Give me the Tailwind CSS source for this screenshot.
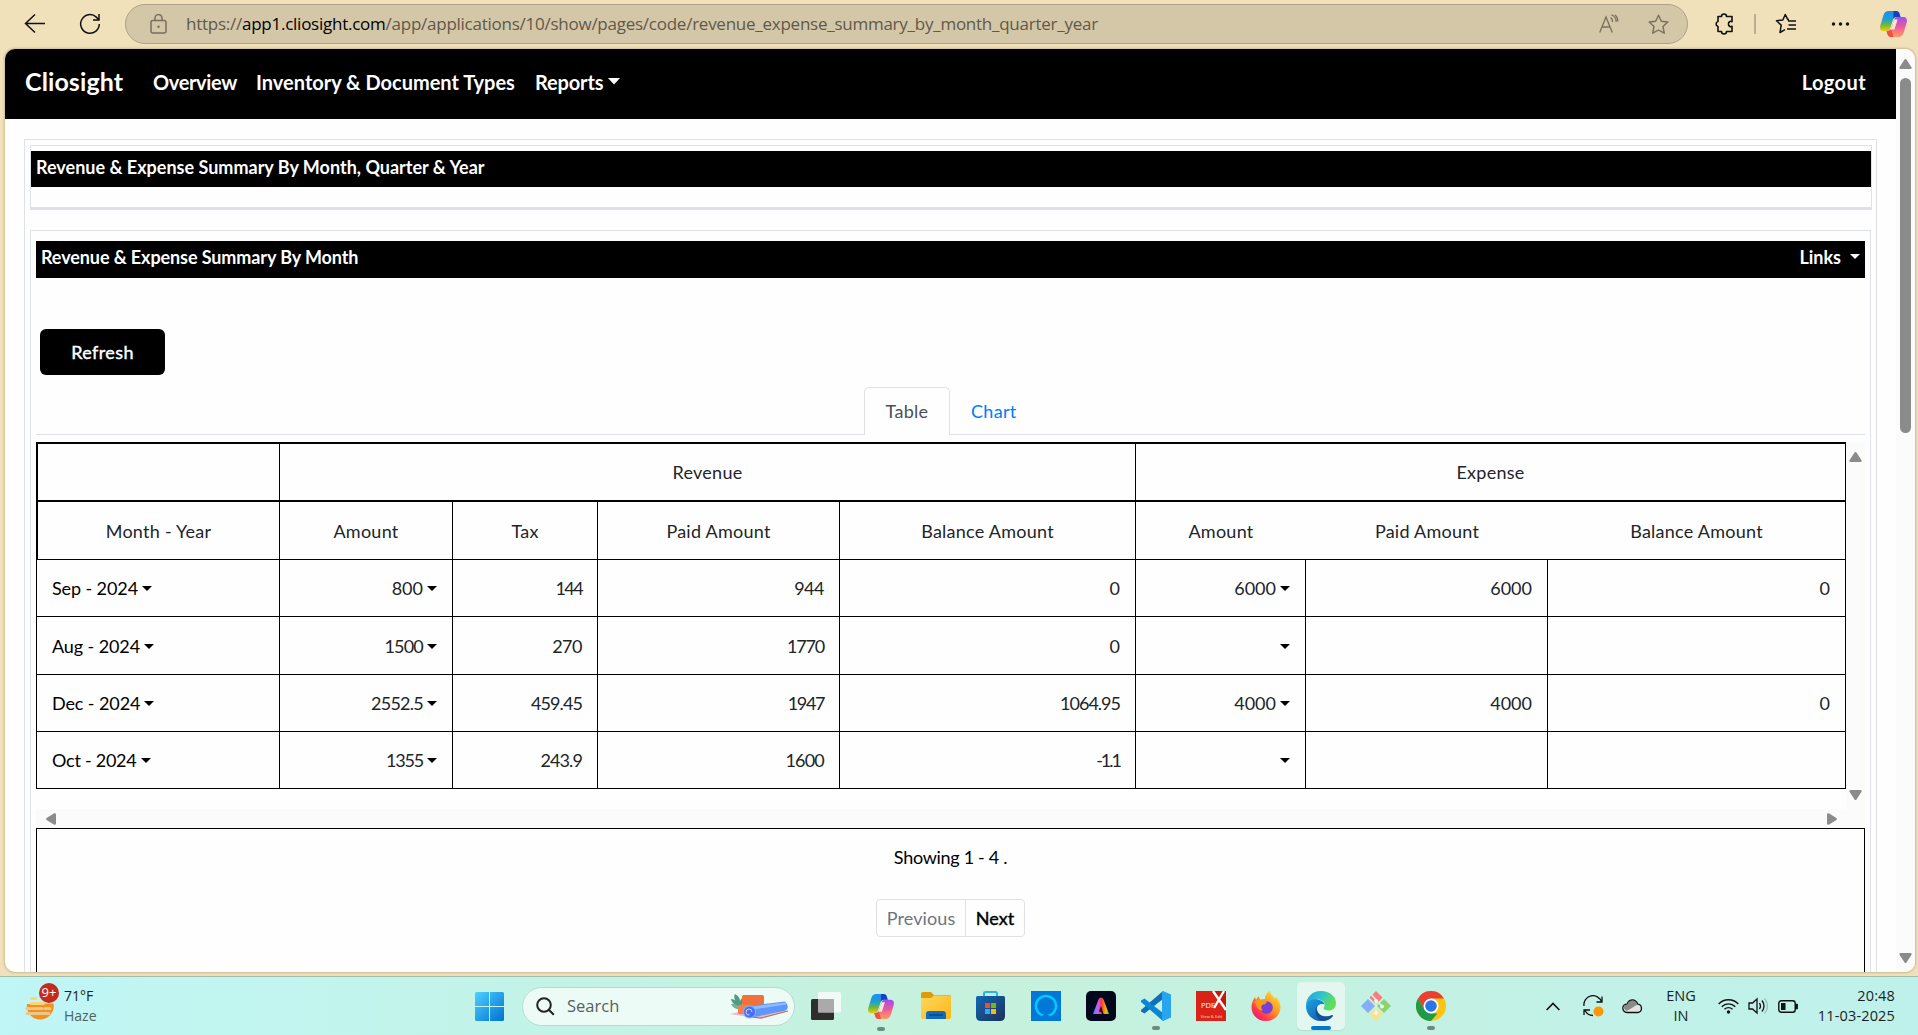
<!DOCTYPE html>
<html lang="en">
<head>
<meta charset="utf-8">
<title>Cliosight</title>
<script src="https://cdn.jsdelivr.net/npm/@tailwindcss/browser@4"></script>
</head>
<body class="relative w-[1918px] h-[1035px] overflow-hidden flex flex-col bg-[#f0e1bb] font-['Open_Sans',sans-serif] text-[#212529]">

<!-- Shared gradients and symbols -->
<svg class="absolute w-0 h-0">
  <defs>
    <linearGradient id="cpA" x1="0" y1="0" x2="0" y2="1"><stop offset="0" stop-color="#1f8ff0"/><stop offset=".4" stop-color="#1aa0d8"/><stop offset=".7" stop-color="#6fb83c"/><stop offset="1" stop-color="#f4c80c"/></linearGradient>
    <linearGradient id="cpB" x1="0" y1="0" x2="0" y2="1"><stop offset="0" stop-color="#a04df0"/><stop offset=".5" stop-color="#ee5a9a"/><stop offset="1" stop-color="#ffa05c"/></linearGradient>
    <linearGradient id="winG" gradientUnits="userSpaceOnUse" x1="0" y1="0" x2="29" y2="29"><stop offset="0" stop-color="#4fd0ff"/><stop offset="1" stop-color="#0071d3"/></linearGradient>
    <linearGradient id="foldG" x1="0" y1="0" x2="1" y2="1"><stop offset="0" stop-color="#ffd860"/><stop offset="1" stop-color="#fbb615"/></linearGradient>
    <linearGradient id="storeG" x1="0" y1="0" x2="1" y2="1"><stop offset="0" stop-color="#1268b8"/><stop offset="1" stop-color="#1d3158"/></linearGradient>
    <linearGradient id="adG" x1="0" y1="0" x2="1" y2="0"><stop offset="0" stop-color="#3f8cff"/><stop offset=".3" stop-color="#c45cff"/><stop offset=".55" stop-color="#ff3b30"/><stop offset=".8" stop-color="#ffb400"/><stop offset="1" stop-color="#38d060"/></linearGradient>
    <linearGradient id="ffG" x1="1" y1="0" x2="0.1" y2="1"><stop offset="0" stop-color="#fff04a"/><stop offset=".45" stop-color="#ff9a20"/><stop offset=".75" stop-color="#ff3b50"/><stop offset="1" stop-color="#e0107c"/></linearGradient>
    <linearGradient id="edA" x1="0" y1="0" x2="1" y2=".4"><stop offset="0" stop-color="#1f9fe0"/><stop offset=".5" stop-color="#2fc3d0"/><stop offset="1" stop-color="#62e055"/></linearGradient>
    <linearGradient id="edB" x1="0" y1="0" x2="1" y2="1"><stop offset="0" stop-color="#1da0e6"/><stop offset="1" stop-color="#0f4f9c"/></linearGradient>
    <symbol id="copilot" viewBox="0 0 28 26">
      <path d="M9 0h7.500c2 0 3 1 3.600 3l.9 3h-4c-2 0-3 1-3.600 3l-2.600 8c-.6 2-1.600 3-3.800 3H4C1 20 0 17.500 .8 14.500L4 4C5 1.200 6.500 0 9 0z" fill="url(#cpA)"/>
      <path d="M14 0h2.500c2 0 3 1 3.600 3l.9 3h-4c-1.500 0-2.600.6-3.200 2z" fill="#1740c0"/>
      <path d="M19 26h-7.500c-2 0-3-1-3.600-3L7 20c3 0 4.200-1 4.800-3l2.600-8c.6-2 1.600-3 3.600-3h6c3 0 4 2.500 3.200 5.500L24 22c-1 2.800-2.500 4-5 4z" fill="url(#cpB)"/>
      <path d="M14 26h-2.500c-2 0-3-1-3.600-3L7 20c2.500 0 4-.6 4.600-2z" fill="#f0503c"/>
      <path d="M14.500 8.500h3.600l-3.200 10h-3.600z" fill="#f3ead0"/>
    </symbol>
  </defs>
</svg>

<!-- Browser toolbar -->
<header class="h-[49px] shrink-0 flex items-start">
  <svg class="ml-[24px] mt-[13px] size-[22px]" viewBox="0 0 22 22" fill="none" stroke="#111" stroke-width="1.500"><path d="M21 10.500H1.500M11 1.500l-9.500 9 9.500 9"/></svg>
  <svg class="ml-[33px] mt-[13px] size-[22px]" viewBox="0 0 22 22" fill="none" stroke="#111" stroke-width="1.500"><path d="M20.300 11a9.300 9.300 0 1 1-3-6.900l2.400 2.400M20 1v6h-6"/></svg>
  <div class="ml-[24px] mt-[4px] w-[1563px] h-[40px] rounded-full border border-[#aea288] bg-[#d4c7a7] flex items-center">
    <svg class="ml-[24px] w-[17px] h-[20px] -mt-[1px]" viewBox="0 0 17 20" fill="none" stroke="#77705f" stroke-width="1.500"><rect x="1" y="6.500" width="15" height="12.500" rx="2"/><path d="M5 6.500V4a3.500 3.500 0 0 1 7 0v2.500"/><circle cx="8.500" cy="12.700" r="1.200" fill="#77705f" stroke="none"/></svg>
    <div class="ml-[19px] w-[1400px] whitespace-nowrap text-[17px] leading-[24px] -mt-[1px] text-[#5f594c] tracking-[-0.25px]">https://<span class="text-black">app1.cliosight.com</span>/app/applications/10/show/pages/code/revenue_expense_summary_by_month_quarter_year</div>
    <svg class="ml-[13px] w-[20px] h-[20px] shrink-0" viewBox="0 0 20 20" fill="none" stroke="#77705f" stroke-width="1.300"><path d="M.7 18.500L7 3l6.300 15.500M3 13h8M11.500 3.500c1.300.8 2.200 2.700 2 4.500M12.500 .8c3 1 5 4 4.500 7M16 1c1.800 1.500 3 4 2.700 6.500" /></svg>
    <svg class="ml-[29px] w-[21px] h-[21px] shrink-0" viewBox="0 0 21 21" fill="none" stroke="#77705f" stroke-width="1.400" stroke-linejoin="round"><path d="M10.500 1.200l2.800 6 6.500.8-4.800 4.500 1.300 6.700-5.800-3.200-5.800 3.200L6 12.500 1.200 8l6.500-.8z"/></svg>
  </div>
  <svg class="ml-[26px] mt-[13px] w-[20px] h-[22px]" viewBox="0 0 20 22" fill="none" stroke="#111" stroke-width="1.600" stroke-linejoin="round"><path d="M4 3.500h3.500a2.500 2.500 0 0 1 5 0H18v5.200a2.300 2.300 0 0 0-3.500 2.300A2.300 2.300 0 0 0 18 13.300v5.200h-5.500a2.500 2.500 0 0 1-5 0H4v-5a2.600 2.600 0 0 1 0-5z"/></svg>
  <div class="ml-[20px] mt-[14px] w-[2px] h-[20px] bg-[#b9ad90]"></div>
  <svg class="ml-[19px] mt-[13px] w-[22px] h-[22px]" viewBox="0 0 22 22" fill="none" stroke="#111" stroke-width="1.500" stroke-linejoin="round"><path d="M14 6.500l-1.300-.1L10.300 1.500 7.800 7 1.500 7.800l4.700 4.300L5 19.500l5-2.800M13 8h8M13.500 12H21M12 16h9"/></svg>
  <svg class="ml-[34px] mt-[22px] w-[20px] h-[5px]" viewBox="0 0 20 5" fill="#111"><circle cx="2.500" cy="2" r="1.700"/><circle cx="9.500" cy="2" r="1.700"/><circle cx="16.500" cy="2" r="1.700"/></svg>
  <svg class="ml-[28px] mt-[11px] w-[29px] h-[26px]"><use href="#copilot"/></svg>
</header>

<!-- Page viewport -->
<div class="ml-[5px] w-[1910px] h-[923px] shrink-0 rounded-[10px] overflow-hidden bg-[#fefefe] flex shadow-[0_0_2px_1px_rgba(160,140,90,0.45)]">
  <div class="w-[1891px] flex flex-col">
    <nav class="h-[70px] shrink-0 bg-black text-white font-['Lato',sans-serif] font-bold text-[20px] leading-[30px] flex pt-[18px] whitespace-nowrap">
      <span class="ml-[20px] w-[128px] text-[25px] leading-[29px] tracking-[0.1px]">Cliosight</span>
      <span class="w-[103px] tracking-[-0.35px]">Overview</span>
      <span class="w-[279px]">Inventory &amp; Document Types</span>
      <span class="flex tracking-[-0.15px]">Reports<svg class="ml-[5px] mt-[11px] w-[12px] h-[7px]" viewBox="0 0 12 7" fill="#fff"><path d="M0 0h12L6 6.500z"/></svg></span>
      <span class="ml-auto mr-[30px] tracking-[0.4px]">Logout</span>
    </nav>

    <main class="ml-[19px] mt-[20px] w-[1853px] h-[900px] border border-[#dee2e6] pt-[5px] pl-[5px]">
      <section class="w-[1842px] h-[65px] border border-b-[3px] border-[#dee2e6] pt-[5px]">
        <h1 class="h-[36px] bg-black text-white font-['Lato',sans-serif] font-bold text-[18px] leading-[33px] pl-[5px]">Revenue &amp; Expense Summary By Month, Quarter &amp; Year</h1>
      </section>

      <section class="mt-[20px] w-[1841px] h-[790px] border border-[#dee2e6] px-[5px] pt-[10px] font-['Lato',sans-serif] text-[18px] leading-[28px]">
        <div class="h-[37px] bg-black text-white font-bold text-[18px] leading-[33px] pl-[5px] pr-[5px] flex justify-between">
          <h2 class="tracking-[-0.1px]">Revenue &amp; Expense Summary By Month</h2>
          <span class="flex">Links<svg class="ml-[9px] mt-[13px] w-[10px] h-[6px]" viewBox="0 0 10 6" fill="#fff"><path d="M0 0h10L5 5z"/></svg></span>
        </div>
        <button class="block ml-[4px] mt-[51px] w-[125px] h-[46px] rounded-[6px] bg-black text-white text-center tracking-[0.4px] [-webkit-text-stroke:0.4px_white]">Refresh</button>

        <div class="mt-[12px] h-[48px] border-b border-[#dee2e6] flex pl-[828px]">
          <div class="w-[86px] h-[48px] border border-b-0 border-[#dee2e6] rounded-t-[5px] bg-[#fefefe] text-center leading-[47px] text-[#495057] tracking-[0.3px]">Table</div>
          <div class="ml-[21px] leading-[49px] text-[#007bff] tracking-[0.3px]">Chart</div>
        </div>

        <div class="mt-[7px] h-[386px] grid grid-cols-[1810px_19px] grid-rows-[367px_19px]">
          <div>
            <table class="table-fixed w-[1810px] border-separate border-spacing-0 text-right [&_td]:border-r [&_td]:border-b [&_td]:border-black [&_td]:pr-[15px] [&_th]:font-normal [&_th]:text-center [&_th]:tracking-[0.25px] [&_th]:border-black [&_th]:border-r [&_svg]:inline-block [&_svg]:w-[10px] [&_svg]:h-[5px] [&_svg]:ml-[4px] [&_svg]:-mt-[3px]">
              <colgroup><col class="w-[244px]"><col class="w-[173px]"><col class="w-[145px]"><col class="w-[242px]"><col class="w-[296px]"><col class="w-[170px]"><col class="w-[242px]"><col class="w-[298px]"></colgroup>
              <tr class="h-[60px] [&_th]:border-y-2"><th class="border-l-2"></th><th colspan="4">Revenue</th><th colspan="3">Expense</th></tr>
              <tr class="h-[58px] [&_th]:border-b"><th class="border-l-2">Month - Year</th><th>Amount</th><th>Tax</th><th>Paid Amount</th><th>Balance Amount</th><th class="border-r-0!">Amount</th><th class="border-r-0!">Paid Amount</th><th>Balance Amount</th></tr>
              <tr class="h-[57px]"><td class="border-l text-left pl-[15px] text-black tracking-[-0.1px]">Sep - 2024<svg viewBox="0 0 10 5"><path d="M0 0h10L5 5z"/></svg></td><td>800<svg viewBox="0 0 10 5"><path d="M0 0h10L5 5z"/></svg></td><td class="tracking-[-1.600px]">144</td><td class="tracking-[-0.5px]">944</td><td>0</td><td>6000<svg viewBox="0 0 10 5"><path d="M0 0h10L5 5z"/></svg></td><td>6000</td><td>0</td></tr>
              <tr class="h-[58px]"><td class="border-l text-left pl-[15px] text-black tracking-[-0.1px]">Aug - 2024<svg viewBox="0 0 10 5"><path d="M0 0h10L5 5z"/></svg></td><td><span class="tracking-[-0.8px]">1500</span><svg viewBox="0 0 10 5"><path d="M0 0h10L5 5z"/></svg></td><td class="tracking-[-0.5px]">270</td><td class="tracking-[-1.200px]">1770</td><td>0</td><td><svg viewBox="0 0 10 5"><path d="M0 0h10L5 5z"/></svg></td><td></td><td></td></tr>
              <tr class="h-[57px]"><td class="border-l text-left pl-[15px] text-black tracking-[-0.1px]">Dec - 2024<svg viewBox="0 0 10 5"><path d="M0 0h10L5 5z"/></svg></td><td><span class="tracking-[-0.75px]">2552.5</span><svg viewBox="0 0 10 5"><path d="M0 0h10L5 5z"/></svg></td><td class="tracking-[-0.9px]">459.45</td><td class="tracking-[-1.400px]">1947</td><td class="tracking-[-1px]">1064.95</td><td>4000<svg viewBox="0 0 10 5"><path d="M0 0h10L5 5z"/></svg></td><td>4000</td><td>0</td></tr>
              <tr class="h-[57px]"><td class="border-l text-left pl-[15px] text-black tracking-[-0.25px]">Oct - 2024<svg viewBox="0 0 10 5"><path d="M0 0h10L5 5z"/></svg></td><td><span class="tracking-[-1.200px]">1355</span><svg viewBox="0 0 10 5"><path d="M0 0h10L5 5z"/></svg></td><td class="tracking-[-0.9px]">243.9</td><td class="tracking-[-0.8px]">1600</td><td class="tracking-[-2px]">-1.1</td><td><svg viewBox="0 0 10 5"><path d="M0 0h10L5 5z"/></svg></td><td></td><td></td></tr>
            </table>
          </div>
          <div class="bg-[#fbfbfb] flex flex-col justify-between items-center pt-[10px] pb-[9px]">
            <svg class="w-[13px] h-[10px]" viewBox="0 0 13 10" fill="#8b8b8b"><path d="M5.500 .6q1-1 2 0l5 7.600q.5 1.600-1 1.800H1.500q-1.500-.2-1-1.800z"/></svg>
            <svg class="w-[13px] h-[10px]" viewBox="0 0 13 10" fill="#8b8b8b"><path d="M5.500 9.400q1 1 2 0l5-7.600Q13 .2 11.500 0h-10Q0 .2.500 1.800z"/></svg>
          </div>
          <div class="bg-[#fbfbfb] col-span-2 flex justify-between items-center pl-[10px] pr-[28px]">
            <svg class="w-[10px] h-[12px]" viewBox="0 0 10 12" fill="#8b8b8b"><path d="M.6 5q-1 1 0 2l7.600 4.700q1.600.4 1.800-1V1.300Q9.800-.2 8.200.3z"/></svg>
            <svg class="w-[10px] h-[12px]" viewBox="0 0 10 12" fill="#8b8b8b"><path d="M9.400 5q1 1 0 2l-7.600 4.700Q.2 12.100 0 10.700V1.300Q.2-.2 1.800.3z"/></svg>
          </div>
        </div>

        <div class="h-[200px] border border-black flex flex-col items-center pt-[14px] text-black">
          <p class="tracking-[-0.3px]">Showing 1 - 4 .</p>
          <div class="mt-[28px] w-[149px] h-[38px] border border-[#dee2e6] rounded-[4px] flex leading-[37px] text-center">
            <span class="w-[89px] border-r border-[#dee2e6] text-[#6c757d] tracking-[0.1px]">Previous</span>
            <span class="flex-1 [-webkit-text-stroke:0.4px_black]">Next</span>
          </div>
        </div>
      </section>
    </main>
  </div>
  <div class="w-[19px] bg-[#fbfbfb] flex flex-col items-center pt-[10px]">
    <svg class="w-[13px] h-[10px] shrink-0" viewBox="0 0 13 10" fill="#8b8b8b"><path d="M5.500 .6q1-1 2 0l5 7.600q.5 1.600-1 1.800H1.500q-1.500-.2-1-1.800z"/></svg>
    <div class="mt-[9px] w-[11px] h-[355px] rounded-full bg-[#8b8b8b]"></div>
    <svg class="mt-auto mb-[9px] w-[13px] h-[10px] shrink-0" viewBox="0 0 13 10" fill="#8b8b8b"><path d="M5.500 9.400q1 1 2 0l5-7.600Q13 .2 11.500 0h-10Q0 .2.500 1.800z"/></svg>
  </div>
</div>

<!-- Taskbar -->
<footer class="mt-[4px] h-[59px] shrink-0 border-t border-[#9fbfae] bg-linear-to-r from-[#bff6f6] via-[#c6f1dc] to-[#bff1ec] flex items-center text-[#1b1f1e]">
  <div class="relative ml-[25px] w-[30px] h-[26px]">
    <svg class="w-[30px] h-[30px]" viewBox="0 0 30 30"><path d="M2 10.500h26.500A13.500 13.500 0 0 1 15 26.500 13.500 13.500 0 0 1 2 10.500z" fill="#f5901e"/><path d="M0 8h18v3H0z" fill="#c0f7f5"/><g stroke="#f8d77c" stroke-width="3" stroke-linecap="round"><path d="M6.500 5.500h4M6.500 10.500h12"/><path d="M2 15.500h15M20 15.500h5M2 20.500h22" stroke="#e8c88c"/></g></svg>
    <span class="absolute left-[14px] -top-[10px] size-[20px] rounded-full bg-[#c42b1c] text-white text-[13px] leading-[19px] text-center">9+</span>
  </div>
  <div class="ml-[9px] w-[411px] text-[14px] leading-[20px] -mt-[1px]"><div>71°F</div><div class="text-[#52625f]">Haze</div></div>
  <svg class="size-[29px]" viewBox="0 0 29 29" fill="url(#winG)"><path d="M0 1.500Q0 0 1.500 0H14v14H0zM15 0h12.500Q29 0 29 1.500V14H15zM0 15h14v14H1.500Q0 29 0 27.500zM15 15h14v12.500q0 1.500-1.500 1.500H15z"/></svg>
  <div class="ml-[18px] w-[273px] h-[39px] rounded-full bg-[#ecfbf6] border border-[#b4dccb] flex items-center">
    <svg class="ml-[13px] size-[19px]" viewBox="0 0 19 19" fill="none" stroke="#222" stroke-width="2"><circle cx="8" cy="8" r="6.800"/><path d="M12.800 12.800l5 5"/></svg>
    <span class="ml-[12px] w-[163px] text-[16.500px] leading-[22px] text-[#55605c]">Search</span>
    <svg class="w-[60px] h-[28px]" viewBox="0 0 60 28"><path d="M0 22l14-3 45 0-28 8z" fill="#eab6d4"/><path d="M22 25l9 1 27-7" stroke="#b5713c" fill="none"/><path d="M9 15Q1 11 1 7q4 0 5 3Q3 5 5 2q5 3 5 7 2-4 4-4-1 8-3 10z" fill="#4f9c83"/><path d="M1 12q5-1 9 5-6 1-9-5z" fill="#6cb598"/><rect x="12" y="3" width="22" height="10" rx="1.500" fill="#f0713c"/><rect x="8" y="13" width="20" height="9" rx="1" fill="#f57f4a"/><path d="M17 14l38-4.500q5 5 1 9L20 26z" fill="#5e96fa"/><path d="M18 15l38-4.500v2L20 18z" fill="#8fbcff"/><circle cx="19.500" cy="20" r="6" fill="#4a6cf0" stroke="#7fb8ff"/><path d="M19.500 23a3 3 0 1 1 2.500-3" fill="none" stroke="#c7dcff"/></svg>
  </div>
  <svg class="ml-[16px] w-[30px] h-[28px]" viewBox="0 0 30 28"><rect y="7" width="23" height="21" rx="1.500" fill="#2e2e2c"/><rect x="7" width="23" height="20.500" rx="1.500" fill="#fafafa" fill-opacity=".85"/><path d="M7 7h16v13.500H7z" fill="#999" fill-opacity=".75"/></svg>
  <div class="relative ml-[26px]"><svg class="w-[28px] h-[25px]"><use href="#copilot"/></svg><i class="absolute left-[10px] top-[33px] w-[8px] h-[4px] rounded-full bg-[#718a80]"></i></div>
  <svg class="ml-[26px] w-[30px] h-[28px]" viewBox="0 0 30 28"><path d="M0 2q0-2 2-2h8l3 3H28q2 0 2 2v8H0z" fill="#dd9c06"/><path d="M0 6h10l3-2.500H28.500q1.500 0 1.500 1.500V25q0 2-2 2H2q-2 0-2-2z" fill="url(#foldG)"/><path d="M5 27v-5q0-3 3-3h14q3 0 3 3v5z" fill="#0f6cbd"/><path d="M8 23h14" stroke="#0a3f78" stroke-width="1.200"/></svg>
  <svg class="ml-[25px] w-[29px] h-[30px]" viewBox="0 0 29 30"><path d="M8 7V2.500Q8 1 9.500 1h10Q21 1 21 2.500V7" fill="none" stroke="#24b8ee" stroke-width="2"/><path d="M0 6.500Q0 5 1.500 5h26Q29 5 29 6.500V25q0 5-5 5H5q-5 0-5-5z" fill="url(#storeG)"/><path d="M9 12h5v5H9z" fill="#f25022"/><path d="M15 12h5v5h-5z" fill="#7fba00"/><path d="M9 18h5v5H9z" fill="#35a7f0"/><path d="M15 18h5v5h-5z" fill="#ffb900"/></svg>
  <svg class="ml-[26px] size-[30px]" viewBox="0 0 30 30"><path d="M0 0h30v30H0z" fill="#0078d7"/><path d="M12 24.500A10 10 0 1 1 18 24.500L15.500 26q-2.500 0-3.500-1.500z" fill="none" stroke="#00caff" stroke-width="2.600"/><path d="M10 25l5-1.500 5 1.500-5 3z" fill="#0078d7"/></svg>
  <svg class="ml-[25px] size-[30px]" viewBox="0 0 30 30"><rect width="30" height="30" rx="5" fill="#02081c"/><path d="M7 23l5.500-14.500Q13.500 6.500 15 6.500t2.500 2L23 23h-5.500L15 15l-2 5.500q3 0 3 2.500z" fill="url(#adG)"/></svg>
  <div class="relative ml-[25px]"><svg class="size-[30px]" viewBox="0 0 30 30"><path d="M22 0v8L3.500 22.500 0 20.500v-1.500z" fill="#0f70b8"/><path d="M22 30v-8L3.500 7.500 0 9.500V11z" fill="#0a86d2"/><path d="M22 0l8 3.500v23L22 30q-.8-.6-1-2V2q.2-1.400 1-2z" fill="#27a5ee"/></svg><i class="absolute left-[11px] top-[35px] w-[8px] h-[4px] rounded-full bg-[#718a80]"></i></div>
  <svg class="ml-[25px] size-[30px]" viewBox="0 0 30 30"><path d="M0 0h30v30H0z" fill="#c8150f"/><path d="M0 0h19l7 11L30 14v16H0z" fill="#db2216"/><path d="M17 0l13 19M28 0L18 17" stroke="#fff" stroke-width="2.400"/><text x="5" y="17" font-family="Open Sans" font-size="7.500" fill="#fff">PDF</text><text x="4.500" y="27" font-family="Open Sans" font-size="4.200" fill="#ffd8d4">View &amp; Edit</text></svg>
  <svg class="ml-[25px] size-[30px]" viewBox="0 0 30 30"><path d="M15 30C6 30 .5 23.500.5 16c0-4 1.500-7 3.500-10l1 3 2.500-4 1.500 3.500 5-.5C14 4 17 1 19 0c0 3 3 4.500 4.500 7.500L25 6c3 3 4.500 6.500 4.500 10 0 8-6 14-14.500 14z" fill="url(#ffG)"/><circle cx="15.500" cy="16.500" r="6.300" fill="#7440d8"/><path d="M3 11q5-4 9-1l4 .5q-1 3-5 3.500-2 3 1 5.500-6 0-7-6z" fill="#ff9a1c"/></svg>
  <div class="relative ml-[16px] size-[48px] rounded-[5px] bg-[#e3f7f0] flex justify-center pt-[9px] shadow-[0_1px_1px_rgba(0,0,0,0.08)]">
    <svg class="size-[30px]" viewBox="0 0 30 30"><path d="M0 15C0 6 6.500 0 15 0c9 0 15 6 15 12 0 5-3.500 7.500-7.500 7.500-3 0-5-1-5-2.200 0-1 1.200-1.500 1.200-3.800 0-2.500-3-5-7-5C6 8.500 1 12 0 15z" fill="url(#edA)"/><path d="M0 15C1 10 6 7.500 11.500 8.500c4 .6 7 3 7 5-6-2-9 3-7 8 2 4.500 9 6 15 2.500C24 28 20 30 15 30 6 30 0 23 0 15z" fill="url(#edB)"/><path d="M11 15c-1.500 7 5 12.500 14 9.500 1.500-.6 2.500-.4 2 .5-2 3-6 5-11 5-6-2-8-9-5-15z" fill="#12509c"/></svg>
    <i class="absolute left-[14px] top-[44px] w-[20px] h-[4px] rounded-full bg-[#0078d4]"></i>
  </div>
  <svg class="ml-[16px] size-[30px]" viewBox="0 0 30 30"><path d="M15 0l6.500 6.500-6.500 7-6.500-7z" fill="#fb7c7c"/><path d="M23 8l7 7-7 7-7-7z" fill="#8cd46a"/><path d="M7 8l7 7-7 7-7-7z" fill="#84aefa"/><path d="M15 16.500l6.500 6.500-6.500 7-6.500-7z" fill="#fbe384"/><path d="M10 3l5 6v14M15 9l6 6" stroke="#d6f5e4" stroke-width="1.500" fill="none"/><circle cx="15" cy="10" r="1.900" fill="#e9fbf2"/><circle cx="21" cy="15.500" r="1.900" fill="#e9fbf2"/><circle cx="15" cy="22" r="1.900" fill="#e9fbf2"/></svg>
  <div class="relative ml-[25px]"><svg class="size-[30px]" viewBox="0 0 30 30"><circle cx="15" cy="15" r="15" fill="#fdc414"/><path d="M2 7.500A15 15 0 0 1 28 7.500H15L8.500 18.700z" fill="#ea4033"/><path d="M2 7.500l6.500 11.200L15 22.500h6.500L15 30A15 15 0 0 1 2 7.500z" fill="#1f9a48"/><circle cx="15" cy="15" r="7.500" fill="#fff"/><circle cx="15" cy="15" r="5.800" fill="#2a74ea"/></svg><i class="absolute left-[11px] top-[35px] w-[8px] h-[4px] rounded-full bg-[#718a80]"></i></div>

  <div class="ml-auto mr-[23px] flex items-center text-[14px] leading-[20px]">
    <svg class="w-[14px] h-[9px]" viewBox="0 0 14 9" fill="none" stroke="#111" stroke-width="1.600"><path d="M.6 8L7 1.500 13.400 8"/></svg>
    <svg class="ml-[22px] w-[22px] h-[22px]" viewBox="0 0 22 22" fill="none" stroke="#111" stroke-width="1.300"><path d="M2 11A9 9 0 0 1 19.500 7M20 1.500V7h-5.500M11 20.500a9 9 0 0 1-8-5M2 20v-5h6"/><circle cx="16.500" cy="16.500" r="5" fill="#ff9500" stroke="none"/></svg>
    <svg class="ml-[18px] w-[21px] h-[15px]" viewBox="0 0 21 15"><path d="M5 13.500a4.200 4.200 0 0 1 0-8.400Q7 1 10.500 1t5.300 4.200a4.200 4.200 0 0 1 .2 8.300z" fill="#e4e4e4" stroke="#111" stroke-width="1.300"/><path d="M1.500 9Q2 5.800 5.200 5.700 7 1.600 10.500 1.600t4.800 4L9 9.500 4.500 12z" fill="#8a8a8a"/></svg>
    <div class="ml-[23px] w-[30px] text-center text-[14.500px] -mt-[1px]"><div>ENG</div><div>IN</div></div>
    <svg class="ml-[22px] w-[21px] h-[16px]" viewBox="0 0 21 16" fill="none" stroke="#111" stroke-width="1.400"><path d="M.7 6a13.500 13.500 0 0 1 19.600 0M3.700 8.700a9.600 9.600 0 0 1 13.600 0M6.500 11.300a5.700 5.700 0 0 1 8 0"/><circle cx="10.500" cy="14" r="1.700" fill="#111" stroke="none"/></svg>
    <svg class="ml-[9px] w-[21px] h-[18px]" viewBox="0 0 21 18" fill="none" stroke="#111" stroke-width="1.300"><path d="M1 6h3.500L9 2v14l-4.500-4H1z"/><path d="M11.500 6q2 3 0 6M14 3.500q4 5.500 0 11"/><path d="M16.500 1.500q6 7.500 0 15" stroke="#9cc0b6"/></svg>
    <svg class="ml-[9px] w-[21px] h-[13px]" viewBox="0 0 21 13" fill="none" stroke="#111" stroke-width="1.400"><rect x=".8" y=".8" width="16.400" height="11.400" rx="2.500"/><rect x="3" y="3" width="4.500" height="7" fill="#111" stroke="none"/><path d="M18 4.500h1.200v4H18z" fill="#111"/></svg>
    <div class="ml-[18px] w-[78px] text-right text-[14.500px] tracking-[0.15px] -mt-[1px] whitespace-nowrap"><div>20:48</div><div>11-03-2025</div></div>
  </div>
</footer>
</body>
</html>
